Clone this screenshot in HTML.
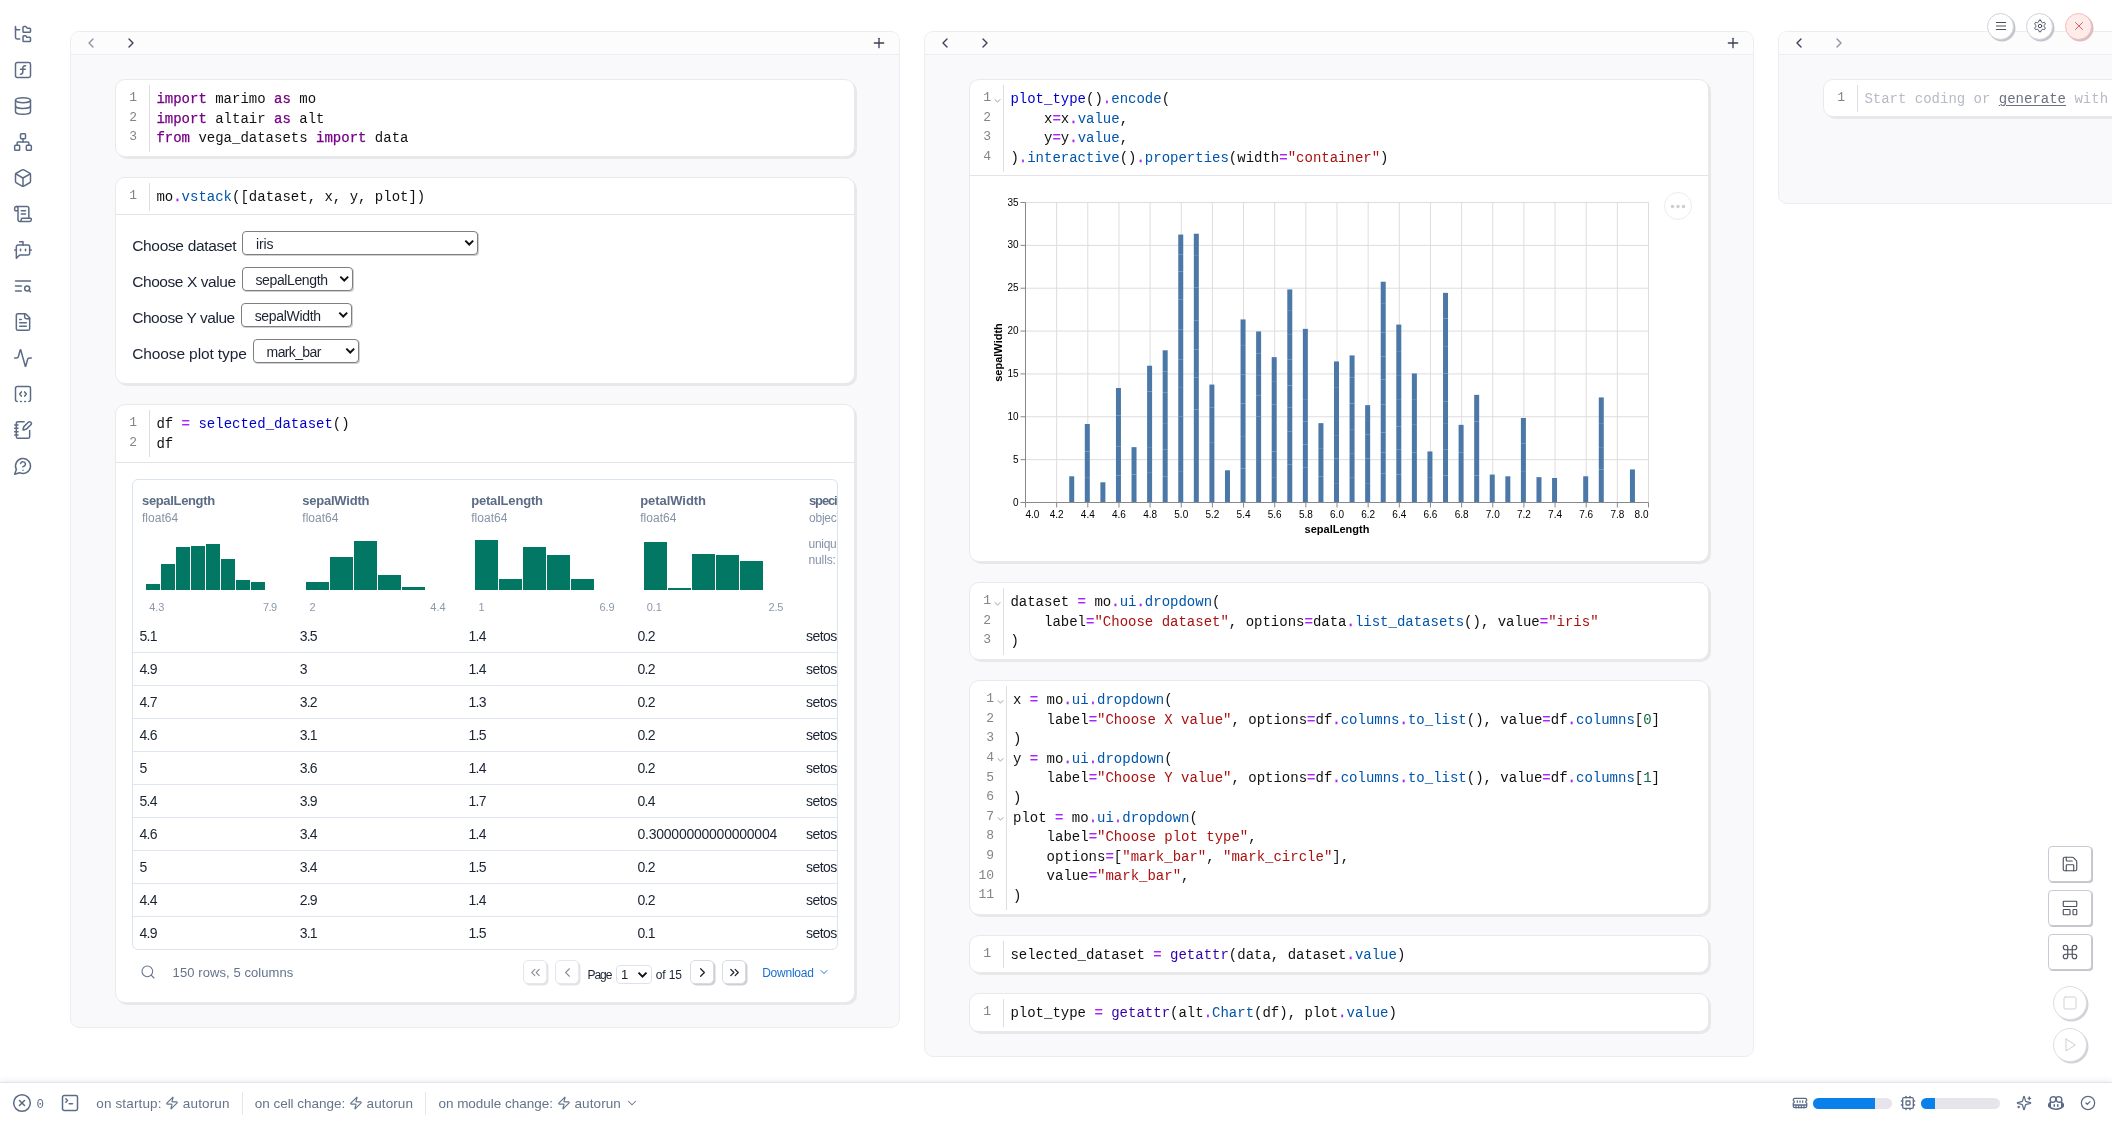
<!DOCTYPE html>
<html lang="en"><head><meta charset="utf-8"><title>marimo</title>
<style>
*{box-sizing:border-box}
html,body{margin:0;padding:0}
#root{position:absolute;left:0;top:0;width:2112px;height:1122px;will-change:transform}
body{width:2112px;height:1122px;overflow:hidden;background:#fff;font-family:"Liberation Sans", sans-serif;position:relative;color:#0f172a}
.abs,.ic,.col,.cell,.colhdr,.gline,.ln,.fold,.cl,.divider,.sel,.tbl,.pbtn,.psel,.cbtn,.sbtn,.rbtn,.status{position:absolute}
.ic{line-height:0}
.ic svg{display:block}
span{white-space:pre}
.abs{white-space:pre}
.col{background:#f9f9fb;border:1px solid #ededf1;border-radius:9px;overflow:hidden}
.colhdr{left:0;top:0;right:0;height:23px;background:#fcfcfd;border-bottom:1px solid #eeeef1}
.cell{background:#fff;border:1px solid #e9e9ec;border-radius:10px;box-shadow:2px 2px 0 0 #e8e8ea}
.gline{width:1px;background:#dddde2}
.ln{font:13px/19.600px "Liberation Mono", monospace;color:#858585;text-align:right;height:19.600px;margin-top:-1.800px}
.fold{line-height:0;margin-top:5.500px}
.cl{font:14px/19.600px "Liberation Mono", monospace;color:#111;white-space:pre;height:19.600px}
.kw{color:#708;-webkit-text-stroke:0.250px #708}
.op{color:#a2f;-webkit-text-stroke:0.250px #a2f}
.divider{left:0;right:0;height:1px;background:#e4e4e8}
.lbl{color:#1a2234;white-space:pre}
.sel{border:1px solid #7f7f7f;border-radius:4px;background:#fff;box-shadow:1px 1px 0 0 #cfcfd4;color:#1c2230}
.tbl{border:1px solid #dbe3f0;border-radius:6px;overflow:hidden;background:#fff}
.th{color:#5c6c85;line-height:20px}
.ty{color:#8593a8;line-height:18px}
.ax{color:#8a98ad;line-height:14px}
.td{color:#1a2233;line-height:20px}
.rowline{left:0;right:0;height:1px;background:#dfe6f2}
.ft{color:#64748b;line-height:20px}
.pg{color:#1a2233;line-height:16px}
.dl{color:#1a6fd0;line-height:16px}
.pbtn{width:24px;height:24px;border:1px solid #d9dbe3;border-radius:5px;background:#fff;box-shadow:1.500px 1.500px 0 0 #cfd0d6}
.pbtn.dis{border-color:#e6e7ec;box-shadow:1.500px 1.500px 0 0 #e3e3e8}
.psel{border:1px solid #dbe3f0;border-radius:4px;background:#fff}
.cbtn{width:27px;height:27px;border-radius:50%;border:1px solid #cfd2db;background:#fff;box-shadow:1.500px 1.500px 0 0 #c4c5cc;color:#3d4450}
.cbtn.red{background:#feeceb;border-color:#f7b9bc;color:#e0525a;box-shadow:1.500px 1.500px 0 0 #d8bfc2}
.sbtn{width:44px;height:36px;border:1px solid #c9cad3;border-radius:4px;background:#fff;box-shadow:1px 1px 0 0 #c4c4cb;color:#4a4e5c}
.rbtn{width:34px;height:34px;border:1px solid #dcdde3;border-radius:50%;background:#fff;box-shadow:1.500px 1.500px 0 0 #d2d3d8;color:#d0d1d6}
.status{left:0;right:0;top:1082px;height:40px;background:#fff;border-top:1px solid #dfe3ec;box-shadow:0 -2px 5px rgba(100,110,140,.10)}
.sbt{color:#64748b;line-height:20px}
.vdiv{top:9px;width:1px;height:23px;background:#e2e6ee}
.zero{font:12.500px/18px "Liberation Mono", monospace;color:#64748b}
.bar{top:14.500px;width:79px;height:11px;border-radius:6px;background:#e5e5eb;overflow:hidden}
.bar div{height:100%;background:#0a80ea}
</style></head>
<body><div id="root">
<div class="ic" style="left:13px;top:24px;color:#5b6b86"><svg width="20" height="20" viewBox="0 0 24 24" fill="none" stroke="currentColor" stroke-width="1.8" stroke-linecap="round" stroke-linejoin="round" ><path d="M20 10a1 1 0 0 0 1-1V6a1 1 0 0 0-1-1h-2.500a1 1 0 0 1-.800-.400l-.900-1.200A1 1 0 0 0 15 3h-2a1 1 0 0 0-1 1v5a1 1 0 0 0 1 1Z"/><path d="M20 21a1 1 0 0 0 1-1v-3a1 1 0 0 0-1-1h-2.900a1 1 0 0 1-.880-.550l-.420-.850a1 1 0 0 0-.920-.600H13a1 1 0 0 0-1 1v5a1 1 0 0 0 1 1Z"/><path d="M3 5a2 2 0 0 0 2 2h3"/><path d="M3 3v13a2 2 0 0 0 2 2h3"/></svg></div><div class="ic" style="left:13px;top:60px;color:#5b6b86"><svg width="20" height="20" viewBox="0 0 24 24" fill="none" stroke="currentColor" stroke-width="1.8" stroke-linecap="round" stroke-linejoin="round" ><rect width="18" height="18" x="3" y="3" rx="2" ry="2"/><path d="M9 17c2 0 2.800-1 2.800-2.800V10c0-2 1-3.300 3.200-3"/><path d="M9 11.200h5.700"/></svg></div><div class="ic" style="left:13px;top:96px;color:#5b6b86"><svg width="20" height="20" viewBox="0 0 24 24" fill="none" stroke="currentColor" stroke-width="1.8" stroke-linecap="round" stroke-linejoin="round" ><ellipse cx="12" cy="5" rx="9" ry="3"/><path d="M3 5V19A9 3 0 0 0 21 19V5"/><path d="M3 12A9 3 0 0 0 21 12"/></svg></div><div class="ic" style="left:13px;top:132px;color:#5b6b86"><svg width="20" height="20" viewBox="0 0 24 24" fill="none" stroke="currentColor" stroke-width="1.8" stroke-linecap="round" stroke-linejoin="round" ><rect x="16" y="16" width="6" height="6" rx="1"/><rect x="2" y="16" width="6" height="6" rx="1"/><rect x="9" y="2" width="6" height="6" rx="1"/><path d="M5 16v-3a1 1 0 0 1 1-1h12a1 1 0 0 1 1 1v3"/><path d="M12 12V8"/></svg></div><div class="ic" style="left:13px;top:168px;color:#5b6b86"><svg width="20" height="20" viewBox="0 0 24 24" fill="none" stroke="currentColor" stroke-width="1.8" stroke-linecap="round" stroke-linejoin="round" ><path d="M21 8a2 2 0 0 0-1-1.730l-7-4a2 2 0 0 0-2 0l-7 4A2 2 0 0 0 3 8v8a2 2 0 0 0 1 1.730l7 4a2 2 0 0 0 2 0l7-4A2 2 0 0 0 21 16Z"/><path d="m3.300 7 8.700 5 8.700-5"/><path d="M12 22V12"/></svg></div><div class="ic" style="left:13px;top:204px;color:#5b6b86"><svg width="20" height="20" viewBox="0 0 24 24" fill="none" stroke="currentColor" stroke-width="1.8" stroke-linecap="round" stroke-linejoin="round" ><path d="M15 12h-5"/><path d="M15 8h-5"/><path d="M19 17V5a2 2 0 0 0-2-2H4"/><path d="M8 21h12a2 2 0 0 0 2-2v-1a1 1 0 0 0-1-1H11a1 1 0 0 0-1 1v1a2 2 0 1 1-4 0V5a2 2 0 1 0-4 0v2a1 1 0 0 0 1 1h3"/></svg></div><div class="ic" style="left:13px;top:240px;color:#5b6b86"><svg width="20" height="20" viewBox="0 0 24 24" fill="none" stroke="currentColor" stroke-width="1.8" stroke-linecap="round" stroke-linejoin="round" ><path d="M12 6V2H8"/><path d="m8 18-4 4V8a2 2 0 0 1 2-2h12a2 2 0 0 1 2 2v8a2 2 0 0 1-2 2Z"/><path d="M2 12h2"/><path d="M9 11v2"/><path d="M15 11v2"/><path d="M20 12h2"/></svg></div><div class="ic" style="left:13px;top:276px;color:#5b6b86"><svg width="20" height="20" viewBox="0 0 24 24" fill="none" stroke="currentColor" stroke-width="1.8" stroke-linecap="round" stroke-linejoin="round" ><path d="M21 6H3"/><path d="M10 12H3"/><path d="M10 18H3"/><path d="m21 19-1.900-1.900"/><circle cx="17" cy="15" r="3"/></svg></div><div class="ic" style="left:13px;top:312px;color:#5b6b86"><svg width="20" height="20" viewBox="0 0 24 24" fill="none" stroke="currentColor" stroke-width="1.8" stroke-linecap="round" stroke-linejoin="round" ><path d="M15 2H6a2 2 0 0 0-2 2v16a2 2 0 0 0 2 2h12a2 2 0 0 0 2-2V7Z"/><path d="M14 2v4a2 2 0 0 0 2 2h4"/><path d="M10 9H8"/><path d="M16 13H8"/><path d="M16 17H8"/></svg></div><div class="ic" style="left:13px;top:348px;color:#5b6b86"><svg width="20" height="20" viewBox="0 0 24 24" fill="none" stroke="currentColor" stroke-width="1.8" stroke-linecap="round" stroke-linejoin="round" ><path d="M22 12h-2.480a2 2 0 0 0-1.930 1.460l-2.350 8.360a.250.250 0 0 1-.480 0L9.240 2.180a.250.250 0 0 0-.480 0l-2.350 8.360A2 2 0 0 1 4.490 12H2"/></svg></div><div class="ic" style="left:13px;top:384px;color:#5b6b86"><svg width="20" height="20" viewBox="0 0 24 24" fill="none" stroke="currentColor" stroke-width="1.8" stroke-linecap="round" stroke-linejoin="round" ><path d="M10 9.500 8 12l2 2.500"/><path d="M14 21h1"/><path d="m14 9.500 2 2.500-2 2.500"/><path d="M5 21a2 2 0 0 1-2-2V5a2 2 0 0 1 2-2h14a2 2 0 0 1 2 2v14a2 2 0 0 1-2 2"/><path d="M9 21h1"/></svg></div><div class="ic" style="left:13px;top:420px;color:#5b6b86"><svg width="20" height="20" viewBox="0 0 24 24" fill="none" stroke="currentColor" stroke-width="1.8" stroke-linecap="round" stroke-linejoin="round" ><path d="M13.400 2H6a2 2 0 0 0-2 2v16a2 2 0 0 0 2 2h12a2 2 0 0 0 2-2v-7.400"/><path d="M2 6h4"/><path d="M2 10h4"/><path d="M2 14h4"/><path d="M2 18h4"/><path d="M21.378 5.626a1 1 0 1 0-3.004-3.004l-5.010 5.012a2 2 0 0 0-.506.854l-.837 2.870a.500.500 0 0 0 .620.620l2.870-.837a2 2 0 0 0 .854-.506z"/></svg></div><div class="ic" style="left:13px;top:456px;color:#5b6b86"><svg width="20" height="20" viewBox="0 0 24 24" fill="none" stroke="currentColor" stroke-width="1.8" stroke-linecap="round" stroke-linejoin="round" ><path d="M7.900 20A9 9 0 1 0 4 16.100L2 22Z"/><path d="M9.090 9a3 3 0 0 1 5.830 1c0 2-3 3-3 3"/><path d="M12 17h.010"/></svg></div>
<div class="col" style="left:70px;top:31px;width:830px;height:997px"><div class="colhdr"><div class="ic" style="left:12px;top:3px;color:#8f92a3"><svg width="16" height="16" viewBox="0 0 24 24" fill="none" stroke="currentColor" stroke-width="2" stroke-linecap="round" stroke-linejoin="round" ><path d="m15 18-6-6 6-6"/></svg></div><div class="ic" style="left:52px;top:3px;color:#3b3f58"><svg width="16" height="16" viewBox="0 0 24 24" fill="none" stroke="currentColor" stroke-width="2" stroke-linecap="round" stroke-linejoin="round" ><path d="m9 18 6-6-6-6"/></svg></div><div class="ic" style="right:12px;top:3px;color:#3b3f58"><svg width="16" height="16" viewBox="0 0 24 24" fill="none" stroke="currentColor" stroke-width="2" stroke-linecap="round" stroke-linejoin="round" ><path d="M5 12h14"/><path d="M12 5v14"/></svg></div></div><div class="cell " style="left:44px;top:47px;width:740px;height:78px"><div class="gline" style="left:33px;top:5px;height:67px"></div><div class="ln" style="top:10.0px;left:0;width:21px">1</div><div class="cl" style="top:10.0px;left:40.4px"><span class="kw">import</span> marimo <span class="kw">as</span> mo</div><div class="ln" style="top:29.6px;left:0;width:21px">2</div><div class="cl" style="top:29.6px;left:40.4px"><span class="kw">import</span> altair <span class="kw">as</span> alt</div><div class="ln" style="top:49.2px;left:0;width:21px">3</div><div class="cl" style="top:49.2px;left:40.4px"><span class="kw">from</span> vega_datasets <span class="kw">import</span> data</div></div><div class="cell " style="left:44px;top:145px;width:740px;height:207px"><div class="gline" style="left:33px;top:5px;height:28px"></div><div class="ln" style="top:10.0px;left:0;width:21px">1</div><div class="cl" style="top:10.0px;left:40.4px">mo<span class="op">.</span><span style="color:#05a">vstack</span>([dataset, x, y, plot])</div><div class="divider" style="top:36px"></div><div class="abs lbl" style="left:16.2px;top:55.5px;line-height:24px"><span style="font-size:15.5px;font-weight:400;letter-spacing:-0.327px;">Choose dataset</span></div><div class="abs lbl" style="left:16.2px;top:91.5px;line-height:24px"><span style="font-size:15.5px;font-weight:400;letter-spacing:-0.431px;">Choose X value</span></div><div class="abs lbl" style="left:16.2px;top:127.5px;line-height:24px"><span style="font-size:15.5px;font-weight:400;letter-spacing:-0.448px;">Choose Y value</span></div><div class="abs lbl" style="left:16.2px;top:163.5px;line-height:24px"><span style="font-size:15.5px;font-weight:400;letter-spacing:-0.114px;">Choose plot type</span></div><div class="sel" style="left:126px;top:53px;width:236px;height:24px"><div class="abs" style="left:13px;top:0.700px;line-height:22px;white-space:pre"><span style="font-size:14px;font-weight:400;letter-spacing:-0.123px;">iris</span></div><svg class="abs" style="right:3px;top:7.0px" width="10.500" height="7.900" viewBox="0 0 12 9" fill="none" stroke="#111" stroke-width="2.200"><path d="M1.500 1.800 6 6.300 10.500 1.800"/></svg></div><div class="sel" style="left:126px;top:89px;width:111px;height:24px"><div class="abs" style="left:12.5px;top:0.700px;line-height:22px;white-space:pre"><span style="font-size:14px;font-weight:400;letter-spacing:-0.382px;">sepalLength</span></div><svg class="abs" style="right:3px;top:7.0px" width="10.500" height="7.900" viewBox="0 0 12 9" fill="none" stroke="#111" stroke-width="2.200"><path d="M1.500 1.800 6 6.300 10.500 1.800"/></svg></div><div class="sel" style="left:125px;top:125px;width:111px;height:24px"><div class="abs" style="left:12.699999999999989px;top:0.700px;line-height:22px;white-space:pre"><span style="font-size:14px;font-weight:400;letter-spacing:-0.327px;">sepalWidth</span></div><svg class="abs" style="right:3px;top:7.0px" width="10.500" height="7.900" viewBox="0 0 12 9" fill="none" stroke="#111" stroke-width="2.200"><path d="M1.500 1.800 6 6.300 10.500 1.800"/></svg></div><div class="sel" style="left:137px;top:161px;width:106px;height:24px"><div class="abs" style="left:12.600000000000023px;top:0.700px;line-height:22px;white-space:pre"><span style="font-size:14px;font-weight:400;letter-spacing:-0.630px;">mark_bar</span></div><svg class="abs" style="right:3px;top:7.0px" width="10.500" height="7.900" viewBox="0 0 12 9" fill="none" stroke="#111" stroke-width="2.200"><path d="M1.500 1.800 6 6.300 10.500 1.800"/></svg></div></div><div class="cell " style="left:44px;top:372px;width:740px;height:599px"><div class="gline" style="left:33px;top:5px;height:47px"></div><div class="ln" style="top:10.0px;left:0;width:21px">1</div><div class="cl" style="top:10.0px;left:40.4px">df <span class="op">=</span> <span style="color:#00c">selected_dataset</span>()</div><div class="ln" style="top:29.6px;left:0;width:21px">2</div><div class="cl" style="top:29.6px;left:40.4px">df</div><div class="divider" style="top:57px"></div><div class="tbl" style="left:16px;top:74px;width:706px;height:471px"><div class="abs th" style="left:9.0px;top:10px"><span style="font-size:13px;font-weight:700;letter-spacing:-0.343px;">sepalLength</span></div><div class="abs ty" style="left:9.0px;top:28.2px"><span style="font-size:12px;font-weight:400;letter-spacing:0.024px;">float64</span></div><div class="abs th" style="left:169.3px;top:10px"><span style="font-size:13px;font-weight:700;letter-spacing:-0.233px;">sepalWidth</span></div><div class="abs ty" style="left:169.3px;top:28.2px"><span style="font-size:12px;font-weight:400;letter-spacing:0.024px;">float64</span></div><div class="abs th" style="left:338.2px;top:10px"><span style="font-size:13px;font-weight:700;letter-spacing:-0.188px;">petalLength</span></div><div class="abs ty" style="left:338.2px;top:28.2px"><span style="font-size:12px;font-weight:400;letter-spacing:0.024px;">float64</span></div><div class="abs th" style="left:507.2px;top:10px"><span style="font-size:13px;font-weight:700;letter-spacing:-0.053px;">petalWidth</span></div><div class="abs ty" style="left:507.2px;top:28.2px"><span style="font-size:12px;font-weight:400;letter-spacing:0.024px;">float64</span></div><div class="abs th" style="left:676px;top:10px"><span style="font-size:13px;font-weight:700;letter-spacing:-1.130px;">speci</span>es</div><div class="abs ty" style="left:676px;top:28.2px"><span style="font-size:12px;font-weight:400;letter-spacing:-0.217px;">objec</span>t</div><div class="abs ty" style="left:675.5px;top:54px"><span style="font-size:12px;font-weight:400;letter-spacing:-0.275px;">uniqu</span>e: 3</div><div class="abs ty" style="left:675.5px;top:70px"><span style="font-size:12px;font-weight:400;letter-spacing:-0.119px;">nulls:</span> 0</div><div class="abs" style="background:#027864;left:13.0px;top:104.0px;width:14px;height:6px"></div><div class="abs" style="background:#027864;left:28.0px;top:84.2px;width:14px;height:25.8px"></div><div class="abs" style="background:#027864;left:43.0px;top:67.3px;width:14px;height:42.7px"></div><div class="abs" style="background:#027864;left:58.0px;top:65.9px;width:14px;height:44.1px"></div><div class="abs" style="background:#027864;left:73.0px;top:64.1px;width:14px;height:45.9px"></div><div class="abs" style="background:#027864;left:88.0px;top:78.6px;width:14px;height:31.4px"></div><div class="abs" style="background:#027864;left:103.0px;top:100.1px;width:14px;height:9.9px"></div><div class="abs" style="background:#027864;left:118.0px;top:101.5px;width:14px;height:8.5px"></div><div class="abs" style="background:#027864;left:173.0px;top:102.0px;width:23px;height:8px"></div><div class="abs" style="background:#027864;left:197.0px;top:77.2px;width:23px;height:32.8px"></div><div class="abs" style="background:#027864;left:221.0px;top:61.3px;width:23px;height:48.7px"></div><div class="abs" style="background:#027864;left:245.0px;top:95.1px;width:23px;height:14.9px"></div><div class="abs" style="background:#027864;left:269.0px;top:107.0px;width:23px;height:3px"></div><div class="abs" style="background:#027864;left:342.0px;top:60.1px;width:23px;height:49.9px"></div><div class="abs" style="background:#027864;left:366.0px;top:99.1px;width:23px;height:10.9px"></div><div class="abs" style="background:#027864;left:390.0px;top:67.1px;width:23px;height:42.9px"></div><div class="abs" style="background:#027864;left:414.0px;top:75.2px;width:23px;height:34.8px"></div><div class="abs" style="background:#027864;left:438.0px;top:99.1px;width:23px;height:10.9px"></div><div class="abs" style="background:#027864;left:511.0px;top:62.1px;width:23px;height:47.9px"></div><div class="abs" style="background:#027864;left:535.0px;top:108.4px;width:23px;height:1.6px"></div><div class="abs" style="background:#027864;left:559.0px;top:74.0px;width:23px;height:36px"></div><div class="abs" style="background:#027864;left:583.0px;top:75.2px;width:23px;height:34.8px"></div><div class="abs" style="background:#027864;left:607.0px;top:81.2px;width:23px;height:28.8px"></div><div class="abs ax" style="left:16.2px;top:119.2px"><span style="font-size:11px;font-weight:400;letter-spacing:-0.099px;">4.3</span></div><div class="abs ax" style="left:130.0px;top:119.2px"><span style="font-size:11px;font-weight:400;letter-spacing:-0.632px;">7.9</span></div><div class="abs ax" style="left:176.6px;top:119.2px"><span style="font-size:11px;font-weight:400;letter-spacing:-0.625px;">2</span></div><div class="abs ax" style="left:297.3px;top:119.2px"><span style="font-size:11px;font-weight:400;letter-spacing:0.068px;">4.4</span></div><div class="abs ax" style="left:345.4px;top:119.2px"><span style="font-size:11px;font-weight:400;letter-spacing:-0.825px;">1</span></div><div class="abs ax" style="left:466.4px;top:119.2px"><span style="font-size:11px;font-weight:400;letter-spacing:-0.032px;">6.9</span></div><div class="abs ax" style="left:513.8px;top:119.2px"><span style="font-size:11px;font-weight:400;letter-spacing:-0.132px;">0.1</span></div><div class="abs ax" style="left:635.4px;top:119.2px"><span style="font-size:11px;font-weight:400;letter-spacing:-0.132px;">2.5</span></div><div class="abs td" style="left:6.5px;top:146.3px;font-size:14px;letter-spacing:-0.750px">5.1</div><div class="abs td" style="left:166.7px;top:146.3px;font-size:14px;letter-spacing:-0.750px">3.5</div><div class="abs td" style="left:335.5px;top:146.3px;font-size:14px;letter-spacing:-0.750px">1.4</div><div class="abs td" style="left:504.5px;top:146.3px;font-size:14px;letter-spacing:-0.750px">0.2</div><div class="abs td" style="left:673.0px;top:146.3px;font-size:14px;letter-spacing:-0.750px"><span style="font-size:14px;font-weight:400;letter-spacing:-0.574px;">setos</span>a</div><div class="abs rowline" style="top:172px"></div><div class="abs td" style="left:6.5px;top:179.3px;font-size:14px;letter-spacing:-0.750px">4.9</div><div class="abs td" style="left:166.7px;top:179.3px;font-size:14px;letter-spacing:-0.750px">3</div><div class="abs td" style="left:335.5px;top:179.3px;font-size:14px;letter-spacing:-0.750px">1.4</div><div class="abs td" style="left:504.5px;top:179.3px;font-size:14px;letter-spacing:-0.750px">0.2</div><div class="abs td" style="left:673.0px;top:179.3px;font-size:14px;letter-spacing:-0.750px"><span style="font-size:14px;font-weight:400;letter-spacing:-0.574px;">setos</span>a</div><div class="abs rowline" style="top:205px"></div><div class="abs td" style="left:6.5px;top:212.3px;font-size:14px;letter-spacing:-0.750px">4.7</div><div class="abs td" style="left:166.7px;top:212.3px;font-size:14px;letter-spacing:-0.750px">3.2</div><div class="abs td" style="left:335.5px;top:212.3px;font-size:14px;letter-spacing:-0.750px">1.3</div><div class="abs td" style="left:504.5px;top:212.3px;font-size:14px;letter-spacing:-0.750px">0.2</div><div class="abs td" style="left:673.0px;top:212.3px;font-size:14px;letter-spacing:-0.750px"><span style="font-size:14px;font-weight:400;letter-spacing:-0.574px;">setos</span>a</div><div class="abs rowline" style="top:238px"></div><div class="abs td" style="left:6.5px;top:245.3px;font-size:14px;letter-spacing:-0.750px">4.6</div><div class="abs td" style="left:166.7px;top:245.3px;font-size:14px;letter-spacing:-0.750px">3.1</div><div class="abs td" style="left:335.5px;top:245.3px;font-size:14px;letter-spacing:-0.750px">1.5</div><div class="abs td" style="left:504.5px;top:245.3px;font-size:14px;letter-spacing:-0.750px">0.2</div><div class="abs td" style="left:673.0px;top:245.3px;font-size:14px;letter-spacing:-0.750px"><span style="font-size:14px;font-weight:400;letter-spacing:-0.574px;">setos</span>a</div><div class="abs rowline" style="top:271px"></div><div class="abs td" style="left:6.5px;top:278.3px;font-size:14px;letter-spacing:-0.750px">5</div><div class="abs td" style="left:166.7px;top:278.3px;font-size:14px;letter-spacing:-0.750px">3.6</div><div class="abs td" style="left:335.5px;top:278.3px;font-size:14px;letter-spacing:-0.750px">1.4</div><div class="abs td" style="left:504.5px;top:278.3px;font-size:14px;letter-spacing:-0.750px">0.2</div><div class="abs td" style="left:673.0px;top:278.3px;font-size:14px;letter-spacing:-0.750px"><span style="font-size:14px;font-weight:400;letter-spacing:-0.574px;">setos</span>a</div><div class="abs rowline" style="top:304px"></div><div class="abs td" style="left:6.5px;top:311.3px;font-size:14px;letter-spacing:-0.750px">5.4</div><div class="abs td" style="left:166.7px;top:311.3px;font-size:14px;letter-spacing:-0.750px">3.9</div><div class="abs td" style="left:335.5px;top:311.3px;font-size:14px;letter-spacing:-0.750px">1.7</div><div class="abs td" style="left:504.5px;top:311.3px;font-size:14px;letter-spacing:-0.750px">0.4</div><div class="abs td" style="left:673.0px;top:311.3px;font-size:14px;letter-spacing:-0.750px"><span style="font-size:14px;font-weight:400;letter-spacing:-0.574px;">setos</span>a</div><div class="abs rowline" style="top:337px"></div><div class="abs td" style="left:6.5px;top:344.3px;font-size:14px;letter-spacing:-0.750px">4.6</div><div class="abs td" style="left:166.7px;top:344.3px;font-size:14px;letter-spacing:-0.750px">3.4</div><div class="abs td" style="left:335.5px;top:344.3px;font-size:14px;letter-spacing:-0.750px">1.4</div><div class="abs td" style="left:504.5px;top:344.3px;font-size:14px;letter-spacing:-0.750px"><span style="font-size:14px;font-weight:400;letter-spacing:-0.239px;">0.30000000000000004</span></div><div class="abs td" style="left:673.0px;top:344.3px;font-size:14px;letter-spacing:-0.750px"><span style="font-size:14px;font-weight:400;letter-spacing:-0.574px;">setos</span>a</div><div class="abs rowline" style="top:370px"></div><div class="abs td" style="left:6.5px;top:377.3px;font-size:14px;letter-spacing:-0.750px">5</div><div class="abs td" style="left:166.7px;top:377.3px;font-size:14px;letter-spacing:-0.750px">3.4</div><div class="abs td" style="left:335.5px;top:377.3px;font-size:14px;letter-spacing:-0.750px">1.5</div><div class="abs td" style="left:504.5px;top:377.3px;font-size:14px;letter-spacing:-0.750px">0.2</div><div class="abs td" style="left:673.0px;top:377.3px;font-size:14px;letter-spacing:-0.750px"><span style="font-size:14px;font-weight:400;letter-spacing:-0.574px;">setos</span>a</div><div class="abs rowline" style="top:403px"></div><div class="abs td" style="left:6.5px;top:410.3px;font-size:14px;letter-spacing:-0.750px">4.4</div><div class="abs td" style="left:166.7px;top:410.3px;font-size:14px;letter-spacing:-0.750px">2.9</div><div class="abs td" style="left:335.5px;top:410.3px;font-size:14px;letter-spacing:-0.750px">1.4</div><div class="abs td" style="left:504.5px;top:410.3px;font-size:14px;letter-spacing:-0.750px">0.2</div><div class="abs td" style="left:673.0px;top:410.3px;font-size:14px;letter-spacing:-0.750px"><span style="font-size:14px;font-weight:400;letter-spacing:-0.574px;">setos</span>a</div><div class="abs rowline" style="top:436px"></div><div class="abs td" style="left:6.5px;top:443.3px;font-size:14px;letter-spacing:-0.750px">4.9</div><div class="abs td" style="left:166.7px;top:443.3px;font-size:14px;letter-spacing:-0.750px">3.1</div><div class="abs td" style="left:335.5px;top:443.3px;font-size:14px;letter-spacing:-0.750px">1.5</div><div class="abs td" style="left:504.5px;top:443.3px;font-size:14px;letter-spacing:-0.750px">0.1</div><div class="abs td" style="left:673.0px;top:443.3px;font-size:14px;letter-spacing:-0.750px"><span style="font-size:14px;font-weight:400;letter-spacing:-0.574px;">setos</span>a</div></div><div class="abs ic" style="left:24px;top:559px;color:#64748b"><svg width="16" height="16" viewBox="0 0 24 24" fill="none" stroke="currentColor" stroke-width="1.6" stroke-linecap="round" stroke-linejoin="round" ><circle cx="11" cy="11" r="8"/><path d="m21 21-4.300-4.300"/></svg></div><div class="abs ft" style="left:56.6px;top:557px"><span style="font-size:13px;font-weight:400;letter-spacing:0.082px;">150 rows, 5 columns</span></div><div class="pbtn dis" style="left:407px;top:555px"><div class="ic" style="left:3.500px;top:3.500px;color:#8a8e9a"><svg width="15" height="15" viewBox="0 0 24 24" fill="none" stroke="currentColor" stroke-width="1.7" stroke-linecap="round" stroke-linejoin="round" ><path d="m11 17-5-5 5-5"/><path d="m18 17-5-5 5-5"/></svg></div></div><div class="pbtn dis" style="left:439px;top:555px"><div class="ic" style="left:3.500px;top:3.500px;color:#8a8e9a"><svg width="15" height="15" viewBox="0 0 24 24" fill="none" stroke="currentColor" stroke-width="1.7" stroke-linecap="round" stroke-linejoin="round" ><path d="m15 18-6-6 6-6"/></svg></div></div><div class="pbtn" style="left:574px;top:555px"><div class="ic" style="left:3.500px;top:3.500px;color:#1e2233"><svg width="15" height="15" viewBox="0 0 24 24" fill="none" stroke="currentColor" stroke-width="2" stroke-linecap="round" stroke-linejoin="round" ><path d="m9 18 6-6-6-6"/></svg></div></div><div class="pbtn" style="left:606px;top:555px"><div class="ic" style="left:3.500px;top:3.500px;color:#1e2233"><svg width="15" height="15" viewBox="0 0 24 24" fill="none" stroke="currentColor" stroke-width="2" stroke-linecap="round" stroke-linejoin="round" ><path d="m6 17 5-5-5-5"/><path d="m13 17 5-5-5-5"/></svg></div></div><div class="abs pg" style="left:471.4px;top:561px"><span style="font-size:12px;font-weight:400;letter-spacing:-1.008px;">Page</span></div><div class="psel" style="left:500px;top:560px;width:36px;height:19px"><div class="abs" style="left:4px;top:0;line-height:18px;font-size:13px;color:#222">1</div><svg class="abs" style="right:3px;top:4.500px" width="11" height="8" viewBox="0 0 12 9" fill="none" stroke="#111" stroke-width="2.200"><path d="M1.500 1.800 6 6.300 10.500 1.800"/></svg></div><div class="abs pg" style="left:539.8px;top:561px"><span style="font-size:12px;font-weight:400;letter-spacing:-0.161px;">of 15</span></div><div class="abs dl" style="left:646.2px;top:559px"><span style="font-size:12px;font-weight:400;letter-spacing:-0.234px;">Download</span></div><div class="abs ic" style="left:702px;top:561px;color:#1a6fd0"><svg width="12" height="12" viewBox="0 0 24 24" fill="none" stroke="currentColor" stroke-width="2" stroke-linecap="round" stroke-linejoin="round" ><path d="m6 9 6 6 6-6"/></svg></div></div></div>
<div class="col" style="left:924px;top:31px;width:830px;height:1026px"><div class="colhdr"><div class="ic" style="left:12px;top:3px;color:#3b3f58"><svg width="16" height="16" viewBox="0 0 24 24" fill="none" stroke="currentColor" stroke-width="2" stroke-linecap="round" stroke-linejoin="round" ><path d="m15 18-6-6 6-6"/></svg></div><div class="ic" style="left:52px;top:3px;color:#3b3f58"><svg width="16" height="16" viewBox="0 0 24 24" fill="none" stroke="currentColor" stroke-width="2" stroke-linecap="round" stroke-linejoin="round" ><path d="m9 18 6-6-6-6"/></svg></div><div class="ic" style="right:12px;top:3px;color:#3b3f58"><svg width="16" height="16" viewBox="0 0 24 24" fill="none" stroke="currentColor" stroke-width="2" stroke-linecap="round" stroke-linejoin="round" ><path d="M5 12h14"/><path d="M12 5v14"/></svg></div></div><div class="cell " style="left:44px;top:47px;width:740px;height:483px"><div class="gline" style="left:33px;top:5px;height:87px"></div><div class="ln" style="top:10.0px;left:0;width:21px">1</div><div class="fold" style="top:10.0px;left:23px"><svg width="9" height="9" viewBox="0 0 9 9" fill="none" stroke="#9a9ea8" stroke-width="1"><path d="M1.700 3.300 4.500 6.100 7.300 3.300"/></svg></div><div class="cl" style="top:10.0px;left:40.4px"><span style="color:#00c">plot_type</span>()<span class="op">.</span><span style="color:#05a">encode</span>(</div><div class="ln" style="top:29.6px;left:0;width:21px">2</div><div class="cl" style="top:29.6px;left:40.4px">    x<span class="op">=</span>x<span class="op">.</span><span style="color:#05a">value</span>,</div><div class="ln" style="top:49.2px;left:0;width:21px">3</div><div class="cl" style="top:49.2px;left:40.4px">    y<span class="op">=</span>y<span class="op">.</span><span style="color:#05a">value</span>,</div><div class="ln" style="top:68.8px;left:0;width:21px">4</div><div class="cl" style="top:68.8px;left:40.4px">)<span class="op">.</span><span style="color:#05a">interactive</span>()<span class="op">.</span><span style="color:#05a">properties</span>(width<span class="op">=</span><span style="color:#a11">&quot;container&quot;</span>)</div><div class="divider" style="top:95px"></div><svg class="abs" style="left:-970px;top:-80px" width="1760" height="580" viewBox="0 0 1760 580" font-family='"Liberation Sans", sans-serif' fill="#000" shape-rendering="auto"><line x1="1025.50" x2="1025.50" y1="202.5" y2="502.5" stroke="#ddd"/><line x1="1056.65" x2="1056.65" y1="202.5" y2="502.5" stroke="#ddd"/><line x1="1087.80" x2="1087.80" y1="202.5" y2="502.5" stroke="#ddd"/><line x1="1118.95" x2="1118.95" y1="202.5" y2="502.5" stroke="#ddd"/><line x1="1150.10" x2="1150.10" y1="202.5" y2="502.5" stroke="#ddd"/><line x1="1181.25" x2="1181.25" y1="202.5" y2="502.5" stroke="#ddd"/><line x1="1212.40" x2="1212.40" y1="202.5" y2="502.5" stroke="#ddd"/><line x1="1243.55" x2="1243.55" y1="202.5" y2="502.5" stroke="#ddd"/><line x1="1274.70" x2="1274.70" y1="202.5" y2="502.5" stroke="#ddd"/><line x1="1305.85" x2="1305.85" y1="202.5" y2="502.5" stroke="#ddd"/><line x1="1337.00" x2="1337.00" y1="202.5" y2="502.5" stroke="#ddd"/><line x1="1368.15" x2="1368.15" y1="202.5" y2="502.5" stroke="#ddd"/><line x1="1399.30" x2="1399.30" y1="202.5" y2="502.5" stroke="#ddd"/><line x1="1430.45" x2="1430.45" y1="202.5" y2="502.5" stroke="#ddd"/><line x1="1461.60" x2="1461.60" y1="202.5" y2="502.5" stroke="#ddd"/><line x1="1492.75" x2="1492.75" y1="202.5" y2="502.5" stroke="#ddd"/><line x1="1523.90" x2="1523.90" y1="202.5" y2="502.5" stroke="#ddd"/><line x1="1555.05" x2="1555.05" y1="202.5" y2="502.5" stroke="#ddd"/><line x1="1586.20" x2="1586.20" y1="202.5" y2="502.5" stroke="#ddd"/><line x1="1617.35" x2="1617.35" y1="202.5" y2="502.5" stroke="#ddd"/><line x1="1648.50" x2="1648.50" y1="202.5" y2="502.5" stroke="#ddd"/><line x1="1025.5" x2="1648.5" y1="502.50" y2="502.50" stroke="#ddd"/><line x1="1025.5" x2="1648.5" y1="459.64" y2="459.64" stroke="#ddd"/><line x1="1025.5" x2="1648.5" y1="416.79" y2="416.79" stroke="#ddd"/><line x1="1025.5" x2="1648.5" y1="373.93" y2="373.93" stroke="#ddd"/><line x1="1025.5" x2="1648.5" y1="331.07" y2="331.07" stroke="#ddd"/><line x1="1025.5" x2="1648.5" y1="288.21" y2="288.21" stroke="#ddd"/><line x1="1025.5" x2="1648.5" y1="245.36" y2="245.36" stroke="#ddd"/><line x1="1025.5" x2="1648.5" y1="202.50" y2="202.50" stroke="#ddd"/><rect x="1193.82" y="472.00" width="5" height="30.00" fill="#4c78a8"/><rect x="1162.68" y="476.29" width="5" height="25.71" fill="#4c78a8"/><rect x="1131.53" y="474.57" width="5" height="27.43" fill="#4c78a8"/><rect x="1115.95" y="475.43" width="5" height="26.57" fill="#4c78a8"/><rect x="1178.25" y="471.14" width="5" height="30.86" fill="#4c78a8"/><rect x="1240.55" y="468.57" width="5" height="33.43" fill="#4c78a8"/><rect x="1115.95" y="446.29" width="5" height="29.14" fill="#4c78a8"/><rect x="1178.25" y="442.00" width="5" height="29.14" fill="#4c78a8"/><rect x="1084.80" y="477.14" width="5" height="24.86" fill="#4c78a8"/><rect x="1162.68" y="449.71" width="5" height="26.57" fill="#4c78a8"/><rect x="1240.55" y="436.86" width="5" height="31.71" fill="#4c78a8"/><rect x="1147.10" y="472.86" width="5" height="29.14" fill="#4c78a8"/><rect x="1147.10" y="447.14" width="5" height="25.71" fill="#4c78a8"/><rect x="1069.22" y="476.29" width="5" height="25.71" fill="#4c78a8"/><rect x="1302.85" y="467.71" width="5" height="34.29" fill="#4c78a8"/><rect x="1287.28" y="464.29" width="5" height="37.71" fill="#4c78a8"/><rect x="1240.55" y="403.43" width="5" height="33.43" fill="#4c78a8"/><rect x="1193.82" y="442.00" width="5" height="30.00" fill="#4c78a8"/><rect x="1287.28" y="431.71" width="5" height="32.57" fill="#4c78a8"/><rect x="1193.82" y="409.43" width="5" height="32.57" fill="#4c78a8"/><rect x="1240.55" y="374.29" width="5" height="29.14" fill="#4c78a8"/><rect x="1193.82" y="377.71" width="5" height="31.71" fill="#4c78a8"/><rect x="1115.95" y="415.43" width="5" height="30.86" fill="#4c78a8"/><rect x="1193.82" y="349.43" width="5" height="28.29" fill="#4c78a8"/><rect x="1147.10" y="418.00" width="5" height="29.14" fill="#4c78a8"/><rect x="1178.25" y="416.29" width="5" height="25.71" fill="#4c78a8"/><rect x="1178.25" y="387.14" width="5" height="29.14" fill="#4c78a8"/><rect x="1209.40" y="472.00" width="5" height="30.00" fill="#4c78a8"/><rect x="1209.40" y="442.86" width="5" height="29.14" fill="#4c78a8"/><rect x="1131.53" y="447.14" width="5" height="27.43" fill="#4c78a8"/><rect x="1147.10" y="391.43" width="5" height="26.57" fill="#4c78a8"/><rect x="1240.55" y="345.14" width="5" height="29.14" fill="#4c78a8"/><rect x="1209.40" y="407.71" width="5" height="35.14" fill="#4c78a8"/><rect x="1256.12" y="466.00" width="5" height="36.00" fill="#4c78a8"/><rect x="1162.68" y="423.14" width="5" height="26.57" fill="#4c78a8"/><rect x="1178.25" y="359.71" width="5" height="27.43" fill="#4c78a8"/><rect x="1256.12" y="436.00" width="5" height="30.00" fill="#4c78a8"/><rect x="1162.68" y="392.29" width="5" height="30.86" fill="#4c78a8"/><rect x="1084.80" y="451.43" width="5" height="25.71" fill="#4c78a8"/><rect x="1193.82" y="320.29" width="5" height="29.14" fill="#4c78a8"/><rect x="1178.25" y="329.71" width="5" height="30.00" fill="#4c78a8"/><rect x="1100.38" y="482.29" width="5" height="19.71" fill="#4c78a8"/><rect x="1084.80" y="424.00" width="5" height="27.43" fill="#4c78a8"/><rect x="1178.25" y="299.71" width="5" height="30.00" fill="#4c78a8"/><rect x="1193.82" y="287.71" width="5" height="32.57" fill="#4c78a8"/><rect x="1147.10" y="365.71" width="5" height="25.71" fill="#4c78a8"/><rect x="1193.82" y="255.14" width="5" height="32.57" fill="#4c78a8"/><rect x="1115.95" y="388.00" width="5" height="27.43" fill="#4c78a8"/><rect x="1224.97" y="470.29" width="5" height="31.71" fill="#4c78a8"/><rect x="1178.25" y="271.43" width="5" height="28.29" fill="#4c78a8"/><rect x="1489.75" y="474.57" width="5" height="27.43" fill="#4c78a8"/><rect x="1396.30" y="474.57" width="5" height="27.43" fill="#4c78a8"/><rect x="1474.18" y="475.43" width="5" height="26.57" fill="#4c78a8"/><rect x="1256.12" y="416.29" width="5" height="19.71" fill="#4c78a8"/><rect x="1411.88" y="478.00" width="5" height="24.00" fill="#4c78a8"/><rect x="1287.28" y="407.71" width="5" height="24.00" fill="#4c78a8"/><rect x="1380.72" y="473.71" width="5" height="28.29" fill="#4c78a8"/><rect x="1162.68" y="371.71" width="5" height="20.57" fill="#4c78a8"/><rect x="1427.45" y="477.14" width="5" height="24.86" fill="#4c78a8"/><rect x="1209.40" y="384.57" width="5" height="23.14" fill="#4c78a8"/><rect x="1178.25" y="254.29" width="5" height="17.14" fill="#4c78a8"/><rect x="1318.43" y="476.29" width="5" height="25.71" fill="#4c78a8"/><rect x="1334.00" y="483.14" width="5" height="18.86" fill="#4c78a8"/><rect x="1349.57" y="477.14" width="5" height="24.86" fill="#4c78a8"/><rect x="1271.70" y="477.14" width="5" height="24.86" fill="#4c78a8"/><rect x="1443.03" y="475.43" width="5" height="26.57" fill="#4c78a8"/><rect x="1271.70" y="451.43" width="5" height="25.71" fill="#4c78a8"/><rect x="1302.85" y="444.57" width="5" height="23.14" fill="#4c78a8"/><rect x="1365.15" y="483.14" width="5" height="18.86" fill="#4c78a8"/><rect x="1271.70" y="430.00" width="5" height="21.43" fill="#4c78a8"/><rect x="1318.43" y="448.86" width="5" height="27.43" fill="#4c78a8"/><rect x="1349.57" y="453.14" width="5" height="24.00" fill="#4c78a8"/><rect x="1380.72" y="452.29" width="5" height="21.43" fill="#4c78a8"/><rect x="1349.57" y="429.14" width="5" height="24.00" fill="#4c78a8"/><rect x="1396.30" y="449.71" width="5" height="24.86" fill="#4c78a8"/><rect x="1427.45" y="451.43" width="5" height="25.71" fill="#4c78a8"/><rect x="1458.60" y="478.00" width="5" height="24.00" fill="#4c78a8"/><rect x="1443.03" y="449.71" width="5" height="25.71" fill="#4c78a8"/><rect x="1334.00" y="458.29" width="5" height="24.86" fill="#4c78a8"/><rect x="1287.28" y="385.43" width="5" height="22.29" fill="#4c78a8"/><rect x="1256.12" y="395.71" width="5" height="20.57" fill="#4c78a8"/><rect x="1256.12" y="375.14" width="5" height="20.57" fill="#4c78a8"/><rect x="1302.85" y="421.43" width="5" height="23.14" fill="#4c78a8"/><rect x="1334.00" y="435.14" width="5" height="23.14" fill="#4c78a8"/><rect x="1240.55" y="319.43" width="5" height="25.71" fill="#4c78a8"/><rect x="1334.00" y="406.00" width="5" height="29.14" fill="#4c78a8"/><rect x="1443.03" y="423.14" width="5" height="26.57" fill="#4c78a8"/><rect x="1380.72" y="432.57" width="5" height="19.71" fill="#4c78a8"/><rect x="1271.70" y="404.29" width="5" height="25.71" fill="#4c78a8"/><rect x="1256.12" y="353.71" width="5" height="21.43" fill="#4c78a8"/><rect x="1256.12" y="331.43" width="5" height="22.29" fill="#4c78a8"/><rect x="1349.57" y="403.43" width="5" height="25.71" fill="#4c78a8"/><rect x="1302.85" y="399.14" width="5" height="22.29" fill="#4c78a8"/><rect x="1178.25" y="234.57" width="5" height="19.71" fill="#4c78a8"/><rect x="1271.70" y="381.14" width="5" height="23.14" fill="#4c78a8"/><rect x="1287.28" y="359.71" width="5" height="25.71" fill="#4c78a8"/><rect x="1287.28" y="334.86" width="5" height="24.86" fill="#4c78a8"/><rect x="1365.15" y="458.29" width="5" height="24.86" fill="#4c78a8"/><rect x="1193.82" y="233.71" width="5" height="21.43" fill="#4c78a8"/><rect x="1287.28" y="310.86" width="5" height="24.00" fill="#4c78a8"/><rect x="1380.72" y="404.29" width="5" height="28.29" fill="#4c78a8"/><rect x="1302.85" y="376.00" width="5" height="23.14" fill="#4c78a8"/><rect x="1505.32" y="476.29" width="5" height="25.71" fill="#4c78a8"/><rect x="1380.72" y="379.43" width="5" height="24.86" fill="#4c78a8"/><rect x="1411.88" y="452.29" width="5" height="25.71" fill="#4c78a8"/><rect x="1583.20" y="476.29" width="5" height="25.71" fill="#4c78a8"/><rect x="1162.68" y="350.29" width="5" height="21.43" fill="#4c78a8"/><rect x="1536.47" y="477.14" width="5" height="24.86" fill="#4c78a8"/><rect x="1443.03" y="401.71" width="5" height="21.43" fill="#4c78a8"/><rect x="1520.90" y="471.14" width="5" height="30.86" fill="#4c78a8"/><rect x="1411.88" y="424.86" width="5" height="27.43" fill="#4c78a8"/><rect x="1396.30" y="426.57" width="5" height="23.14" fill="#4c78a8"/><rect x="1458.60" y="452.29" width="5" height="25.71" fill="#4c78a8"/><rect x="1287.28" y="289.43" width="5" height="21.43" fill="#4c78a8"/><rect x="1302.85" y="352.00" width="5" height="24.00" fill="#4c78a8"/><rect x="1396.30" y="399.14" width="5" height="27.43" fill="#4c78a8"/><rect x="1411.88" y="399.14" width="5" height="25.71" fill="#4c78a8"/><rect x="1598.78" y="469.43" width="5" height="32.57" fill="#4c78a8"/><rect x="1598.78" y="447.14" width="5" height="22.29" fill="#4c78a8"/><rect x="1334.00" y="387.14" width="5" height="18.86" fill="#4c78a8"/><rect x="1474.18" y="448.00" width="5" height="27.43" fill="#4c78a8"/><rect x="1271.70" y="357.14" width="5" height="24.00" fill="#4c78a8"/><rect x="1598.78" y="423.14" width="5" height="24.00" fill="#4c78a8"/><rect x="1380.72" y="356.29" width="5" height="23.14" fill="#4c78a8"/><rect x="1443.03" y="373.43" width="5" height="28.29" fill="#4c78a8"/><rect x="1520.90" y="443.71" width="5" height="27.43" fill="#4c78a8"/><rect x="1365.15" y="434.29" width="5" height="24.00" fill="#4c78a8"/><rect x="1349.57" y="377.71" width="5" height="25.71" fill="#4c78a8"/><rect x="1396.30" y="375.14" width="5" height="24.00" fill="#4c78a8"/><rect x="1520.90" y="418.00" width="5" height="25.71" fill="#4c78a8"/><rect x="1552.05" y="478.00" width="5" height="24.00" fill="#4c78a8"/><rect x="1629.93" y="469.43" width="5" height="32.57" fill="#4c78a8"/><rect x="1396.30" y="351.14" width="5" height="24.00" fill="#4c78a8"/><rect x="1380.72" y="332.29" width="5" height="24.00" fill="#4c78a8"/><rect x="1349.57" y="355.43" width="5" height="22.29" fill="#4c78a8"/><rect x="1598.78" y="397.43" width="5" height="25.71" fill="#4c78a8"/><rect x="1380.72" y="303.14" width="5" height="29.14" fill="#4c78a8"/><rect x="1396.30" y="324.57" width="5" height="26.57" fill="#4c78a8"/><rect x="1334.00" y="361.43" width="5" height="25.71" fill="#4c78a8"/><rect x="1474.18" y="421.43" width="5" height="26.57" fill="#4c78a8"/><rect x="1443.03" y="346.86" width="5" height="26.57" fill="#4c78a8"/><rect x="1474.18" y="394.86" width="5" height="26.57" fill="#4c78a8"/><rect x="1302.85" y="328.86" width="5" height="23.14" fill="#4c78a8"/><rect x="1458.60" y="424.86" width="5" height="27.43" fill="#4c78a8"/><rect x="1443.03" y="318.57" width="5" height="28.29" fill="#4c78a8"/><rect x="1443.03" y="292.86" width="5" height="25.71" fill="#4c78a8"/><rect x="1380.72" y="281.71" width="5" height="21.43" fill="#4c78a8"/><rect x="1411.88" y="373.43" width="5" height="25.71" fill="#4c78a8"/><rect x="1365.15" y="405.14" width="5" height="29.14" fill="#4c78a8"/><rect x="1318.43" y="423.14" width="5" height="25.71" fill="#4c78a8"/><line x1="1025.5" x2="1648.5" y1="502.5" y2="502.5" stroke="#888"/><line x1="1025.5" x2="1025.5" y1="202.5" y2="502.5" stroke="#888"/><line x1="1025.50" x2="1025.50" y1="502.5" y2="507.5" stroke="#888"/><text x="1025.50" y="517.5" text-anchor="start" font-size="10">4.0</text><line x1="1056.65" x2="1056.65" y1="502.5" y2="507.5" stroke="#888"/><text x="1056.65" y="517.5" text-anchor="middle" font-size="10">4.2</text><line x1="1087.80" x2="1087.80" y1="502.5" y2="507.5" stroke="#888"/><text x="1087.80" y="517.5" text-anchor="middle" font-size="10">4.4</text><line x1="1118.95" x2="1118.95" y1="502.5" y2="507.5" stroke="#888"/><text x="1118.95" y="517.5" text-anchor="middle" font-size="10">4.6</text><line x1="1150.10" x2="1150.10" y1="502.5" y2="507.5" stroke="#888"/><text x="1150.10" y="517.5" text-anchor="middle" font-size="10">4.8</text><line x1="1181.25" x2="1181.25" y1="502.5" y2="507.5" stroke="#888"/><text x="1181.25" y="517.5" text-anchor="middle" font-size="10">5.0</text><line x1="1212.40" x2="1212.40" y1="502.5" y2="507.5" stroke="#888"/><text x="1212.40" y="517.5" text-anchor="middle" font-size="10">5.2</text><line x1="1243.55" x2="1243.55" y1="502.5" y2="507.5" stroke="#888"/><text x="1243.55" y="517.5" text-anchor="middle" font-size="10">5.4</text><line x1="1274.70" x2="1274.70" y1="502.5" y2="507.5" stroke="#888"/><text x="1274.70" y="517.5" text-anchor="middle" font-size="10">5.6</text><line x1="1305.85" x2="1305.85" y1="502.5" y2="507.5" stroke="#888"/><text x="1305.85" y="517.5" text-anchor="middle" font-size="10">5.8</text><line x1="1337.00" x2="1337.00" y1="502.5" y2="507.5" stroke="#888"/><text x="1337.00" y="517.5" text-anchor="middle" font-size="10">6.0</text><line x1="1368.15" x2="1368.15" y1="502.5" y2="507.5" stroke="#888"/><text x="1368.15" y="517.5" text-anchor="middle" font-size="10">6.2</text><line x1="1399.30" x2="1399.30" y1="502.5" y2="507.5" stroke="#888"/><text x="1399.30" y="517.5" text-anchor="middle" font-size="10">6.4</text><line x1="1430.45" x2="1430.45" y1="502.5" y2="507.5" stroke="#888"/><text x="1430.45" y="517.5" text-anchor="middle" font-size="10">6.6</text><line x1="1461.60" x2="1461.60" y1="502.5" y2="507.5" stroke="#888"/><text x="1461.60" y="517.5" text-anchor="middle" font-size="10">6.8</text><line x1="1492.75" x2="1492.75" y1="502.5" y2="507.5" stroke="#888"/><text x="1492.75" y="517.5" text-anchor="middle" font-size="10">7.0</text><line x1="1523.90" x2="1523.90" y1="502.5" y2="507.5" stroke="#888"/><text x="1523.90" y="517.5" text-anchor="middle" font-size="10">7.2</text><line x1="1555.05" x2="1555.05" y1="502.5" y2="507.5" stroke="#888"/><text x="1555.05" y="517.5" text-anchor="middle" font-size="10">7.4</text><line x1="1586.20" x2="1586.20" y1="502.5" y2="507.5" stroke="#888"/><text x="1586.20" y="517.5" text-anchor="middle" font-size="10">7.6</text><line x1="1617.35" x2="1617.35" y1="502.5" y2="507.5" stroke="#888"/><text x="1617.35" y="517.5" text-anchor="middle" font-size="10">7.8</text><line x1="1648.50" x2="1648.50" y1="502.5" y2="507.5" stroke="#888"/><text x="1648.50" y="517.5" text-anchor="end" font-size="10">8.0</text><line x1="1020.5" x2="1025.5" y1="502.50" y2="502.50" stroke="#888"/><text x="1018.5" y="505.50" text-anchor="end" font-size="10">0</text><line x1="1020.5" x2="1025.5" y1="459.64" y2="459.64" stroke="#888"/><text x="1018.5" y="462.64" text-anchor="end" font-size="10">5</text><line x1="1020.5" x2="1025.5" y1="416.79" y2="416.79" stroke="#888"/><text x="1018.5" y="419.79" text-anchor="end" font-size="10">10</text><line x1="1020.5" x2="1025.5" y1="373.93" y2="373.93" stroke="#888"/><text x="1018.5" y="376.93" text-anchor="end" font-size="10">15</text><line x1="1020.5" x2="1025.5" y1="331.07" y2="331.07" stroke="#888"/><text x="1018.5" y="334.07" text-anchor="end" font-size="10">20</text><line x1="1020.5" x2="1025.5" y1="288.21" y2="288.21" stroke="#888"/><text x="1018.5" y="291.21" text-anchor="end" font-size="10">25</text><line x1="1020.5" x2="1025.5" y1="245.36" y2="245.36" stroke="#888"/><text x="1018.5" y="248.36" text-anchor="end" font-size="10">30</text><line x1="1020.5" x2="1025.5" y1="202.50" y2="202.50" stroke="#888"/><text x="1018.5" y="205.50" text-anchor="end" font-size="10">35</text><text x="1337.0" y="532.5" text-anchor="middle" font-size="11" font-weight="bold">sepalLength</text><text transform="translate(1001.5,352.5) rotate(-90)" text-anchor="middle" font-size="11" font-weight="bold">sepalWidth</text></svg><div class="abs" style="left:694px;top:112px;width:28px;height:28px;border:1px solid #ececec;border-radius:50%;background:#fff"><svg class="abs" style="left:5px;top:10.500px" width="16" height="5" viewBox="0 0 16 5" fill="#cfcfcf"><circle cx="2.500" cy="2.500" r="1.750"/><circle cx="8" cy="2.500" r="1.750"/><circle cx="13.500" cy="2.500" r="1.750"/></svg></div></div><div class="cell " style="left:44px;top:550px;width:740px;height:78px"><div class="gline" style="left:33px;top:5px;height:67px"></div><div class="ln" style="top:10.0px;left:0;width:21px">1</div><div class="fold" style="top:10.0px;left:23px"><svg width="9" height="9" viewBox="0 0 9 9" fill="none" stroke="#9a9ea8" stroke-width="1"><path d="M1.700 3.300 4.500 6.100 7.300 3.300"/></svg></div><div class="cl" style="top:10.0px;left:40.4px">dataset <span class="op">=</span> mo<span class="op">.</span><span style="color:#05a">ui</span><span class="op">.</span><span style="color:#05a">dropdown</span>(</div><div class="ln" style="top:29.6px;left:0;width:21px">2</div><div class="cl" style="top:29.6px;left:40.4px">    label<span class="op">=</span><span style="color:#a11">&quot;Choose dataset&quot;</span>, options<span class="op">=</span>data<span class="op">.</span><span style="color:#05a">list_datasets</span>(), value<span class="op">=</span><span style="color:#a11">&quot;iris&quot;</span></div><div class="ln" style="top:49.2px;left:0;width:21px">3</div><div class="cl" style="top:49.2px;left:40.4px">)</div></div><div class="cell " style="left:44px;top:648px;width:740px;height:235px"><div class="gline" style="left:36px;top:5px;height:224px"></div><div class="ln" style="top:10.0px;left:0;width:24px">1</div><div class="fold" style="top:10.0px;left:26px"><svg width="9" height="9" viewBox="0 0 9 9" fill="none" stroke="#9a9ea8" stroke-width="1"><path d="M1.700 3.300 4.500 6.100 7.300 3.300"/></svg></div><div class="cl" style="top:10.0px;left:43px">x <span class="op">=</span> mo<span class="op">.</span><span style="color:#05a">ui</span><span class="op">.</span><span style="color:#05a">dropdown</span>(</div><div class="ln" style="top:29.6px;left:0;width:24px">2</div><div class="cl" style="top:29.6px;left:43px">    label<span class="op">=</span><span style="color:#a11">&quot;Choose X value&quot;</span>, options<span class="op">=</span>df<span class="op">.</span><span style="color:#05a">columns</span><span class="op">.</span><span style="color:#05a">to_list</span>(), value<span class="op">=</span>df<span class="op">.</span><span style="color:#05a">columns</span>[<span style="color:#164">0</span>]</div><div class="ln" style="top:49.2px;left:0;width:24px">3</div><div class="cl" style="top:49.2px;left:43px">)</div><div class="ln" style="top:68.8px;left:0;width:24px">4</div><div class="fold" style="top:68.8px;left:26px"><svg width="9" height="9" viewBox="0 0 9 9" fill="none" stroke="#9a9ea8" stroke-width="1"><path d="M1.700 3.300 4.500 6.100 7.300 3.300"/></svg></div><div class="cl" style="top:68.8px;left:43px">y <span class="op">=</span> mo<span class="op">.</span><span style="color:#05a">ui</span><span class="op">.</span><span style="color:#05a">dropdown</span>(</div><div class="ln" style="top:88.4px;left:0;width:24px">5</div><div class="cl" style="top:88.4px;left:43px">    label<span class="op">=</span><span style="color:#a11">&quot;Choose Y value&quot;</span>, options<span class="op">=</span>df<span class="op">.</span><span style="color:#05a">columns</span><span class="op">.</span><span style="color:#05a">to_list</span>(), value<span class="op">=</span>df<span class="op">.</span><span style="color:#05a">columns</span>[<span style="color:#164">1</span>]</div><div class="ln" style="top:108.0px;left:0;width:24px">6</div><div class="cl" style="top:108.0px;left:43px">)</div><div class="ln" style="top:127.6px;left:0;width:24px">7</div><div class="fold" style="top:127.6px;left:26px"><svg width="9" height="9" viewBox="0 0 9 9" fill="none" stroke="#9a9ea8" stroke-width="1"><path d="M1.700 3.300 4.500 6.100 7.300 3.300"/></svg></div><div class="cl" style="top:127.6px;left:43px">plot <span class="op">=</span> mo<span class="op">.</span><span style="color:#05a">ui</span><span class="op">.</span><span style="color:#05a">dropdown</span>(</div><div class="ln" style="top:147.2px;left:0;width:24px">8</div><div class="cl" style="top:147.2px;left:43px">    label<span class="op">=</span><span style="color:#a11">&quot;Choose plot type&quot;</span>,</div><div class="ln" style="top:166.8px;left:0;width:24px">9</div><div class="cl" style="top:166.8px;left:43px">    options<span class="op">=</span>[<span style="color:#a11">&quot;mark_bar&quot;</span>, <span style="color:#a11">&quot;mark_circle&quot;</span>],</div><div class="ln" style="top:186.4px;left:0;width:24px">10</div><div class="cl" style="top:186.4px;left:43px">    value<span class="op">=</span><span style="color:#a11">&quot;mark_bar&quot;</span>,</div><div class="ln" style="top:206.0px;left:0;width:24px">11</div><div class="cl" style="top:206.0px;left:43px">)</div></div><div class="cell " style="left:44px;top:903px;width:740px;height:38px"><div class="gline" style="left:33px;top:5px;height:27px"></div><div class="ln" style="top:10.0px;left:0;width:21px">1</div><div class="cl" style="top:10.0px;left:40.4px">selected_dataset <span class="op">=</span> <span style="color:#30a">getattr</span>(data, dataset<span class="op">.</span><span style="color:#05a">value</span>)</div></div><div class="cell " style="left:44px;top:961px;width:740px;height:38.6px"><div class="gline" style="left:33px;top:5px;height:27.6px"></div><div class="ln" style="top:10.0px;left:0;width:21px">1</div><div class="cl" style="top:10.0px;left:40.4px">plot_type <span class="op">=</span> <span style="color:#30a">getattr</span>(alt<span class="op">.</span><span style="color:#05a">Chart</span>(df), plot<span class="op">.</span><span style="color:#05a">value</span>)</div></div></div>
<div class="col" style="left:1778px;top:31px;width:830px;height:173px"><div class="colhdr"><div class="ic" style="left:12px;top:3px;color:#3b3f58"><svg width="16" height="16" viewBox="0 0 24 24" fill="none" stroke="currentColor" stroke-width="2" stroke-linecap="round" stroke-linejoin="round" ><path d="m15 18-6-6 6-6"/></svg></div><div class="ic" style="left:52px;top:3px;color:#8f92a3"><svg width="16" height="16" viewBox="0 0 24 24" fill="none" stroke="currentColor" stroke-width="2" stroke-linecap="round" stroke-linejoin="round" ><path d="m9 18 6-6-6-6"/></svg></div><div class="ic" style="right:12px;top:3px;color:#3b3f58"><svg width="16" height="16" viewBox="0 0 24 24" fill="none" stroke="currentColor" stroke-width="2" stroke-linecap="round" stroke-linejoin="round" ><path d="M5 12h14"/><path d="M12 5v14"/></svg></div></div><div class="cell " style="left:44px;top:47px;width:740px;height:38px"><div class="gline" style="left:33px;top:5px;height:27px"></div><div class="ln" style="top:10.0px;left:0;width:21px">1</div><div class="cl" style="top:10.0px;left:40.4px"><span style="color:#b7bac7">Start coding or <span style="color:#6c7080;text-decoration:underline;text-underline-offset:2px">generate</span> with AI.</span></div></div></div>
<div class="cbtn " style="left:1987.2px;top:13px"><div class="ic" style="left:5.500px;top:4.800px"><svg width="14" height="14" viewBox="0 0 24 24" fill="none" stroke="currentColor" stroke-width="1.6" stroke-linecap="round" stroke-linejoin="round" ><path d="M4 12h16"/><path d="M4 18h16"/><path d="M4 6h16"/></svg></div></div><div class="cbtn " style="left:2026.2px;top:13px"><div class="ic" style="left:5.500px;top:4.800px"><svg width="14" height="14" viewBox="0 0 24 24" fill="none" stroke="currentColor" stroke-width="1.6" stroke-linecap="round" stroke-linejoin="round" ><path d="M12.220 2h-.440a2 2 0 0 0-2 2v.180a2 2 0 0 1-1 1.730l-.430.250a2 2 0 0 1-2 0l-.150-.080a2 2 0 0 0-2.730.730l-.220.380a2 2 0 0 0 .730 2.730l.150.100a2 2 0 0 1 1 1.720v.510a2 2 0 0 1-1 1.740l-.150.090a2 2 0 0 0-.730 2.730l.220.380a2 2 0 0 0 2.730.730l.150-.080a2 2 0 0 1 2 0l.430.250a2 2 0 0 1 1 1.730V20a2 2 0 0 0 2 2h.440a2 2 0 0 0 2-2v-.180a2 2 0 0 1 1-1.730l.430-.250a2 2 0 0 1 2 0l.150.080a2 2 0 0 0 2.730-.730l.220-.390a2 2 0 0 0-.730-2.730l-.150-.080a2 2 0 0 1-1-1.740v-.500a2 2 0 0 1 1-1.740l.150-.090a2 2 0 0 0 .730-2.730l-.220-.380a2 2 0 0 0-2.730-.730l-.150.080a2 2 0 0 1-2 0l-.430-.250a2 2 0 0 1-1-1.730V4a2 2 0 0 0-2-2z"/><circle cx="12" cy="12" r="3"/></svg></div></div><div class="cbtn red" style="left:2065.2px;top:13px"><div class="ic" style="left:5.500px;top:4.800px"><svg width="14" height="14" viewBox="0 0 24 24" fill="none" stroke="currentColor" stroke-width="1.6" stroke-linecap="round" stroke-linejoin="round" ><path d="M18 6 6 18"/><path d="m6 6 12 12"/></svg></div></div>
<div class="sbtn" style="left:2048px;top:846px"><div class="ic" style="left:12px;top:8px"><svg width="18" height="18" viewBox="0 0 24 24" fill="none" stroke="currentColor" stroke-width="1.5" stroke-linecap="round" stroke-linejoin="round" ><path d="M15.200 3a2 2 0 0 1 1.400.600l3.800 3.800a2 2 0 0 1 .600 1.400V19a2 2 0 0 1-2 2H5a2 2 0 0 1-2-2V5a2 2 0 0 1 2-2z"/><path d="M17 21v-7a1 1 0 0 0-1-1H8a1 1 0 0 0-1 1v7"/><path d="M7 3v4a1 1 0 0 0 1 1h7"/></svg></div></div><div class="sbtn" style="left:2048px;top:890px"><div class="ic" style="left:12px;top:8px"><svg width="18" height="18" viewBox="0 0 24 24" fill="none" stroke="currentColor" stroke-width="1.5" stroke-linecap="round" stroke-linejoin="round" ><rect width="18" height="7" x="3" y="3" rx="1"/><rect width="9" height="7" x="3" y="14" rx="1"/><rect width="5" height="7" x="16" y="14" rx="1"/></svg></div></div><div class="sbtn" style="left:2048px;top:934px"><div class="ic" style="left:12px;top:8px"><svg width="18" height="18" viewBox="0 0 24 24" fill="none" stroke="currentColor" stroke-width="1.5" stroke-linecap="round" stroke-linejoin="round" ><path d="M15 6v12a3 3 0 1 0 3-3H6a3 3 0 1 0 3 3V6a3 3 0 1 0-3 3h12a3 3 0 1 0-3-3"/></svg></div></div><div class="rbtn" style="left:2053.4px;top:986px"><div class="ic" style="left:8px;top:8px"><svg width="16" height="16" viewBox="0 0 24 24" fill="none" stroke="currentColor" stroke-width="1.5" stroke-linecap="round" stroke-linejoin="round" ><rect width="18" height="18" x="3" y="3" rx="2"/></svg></div></div><div class="rbtn" style="left:2053.4px;top:1028px"><div class="ic" style="left:8px;top:8px"><svg width="16" height="16" viewBox="0 0 24 24" fill="none" stroke="currentColor" stroke-width="1.5" stroke-linecap="round" stroke-linejoin="round" ><polygon points="6 3 20 12 6 21 6 3"/></svg></div></div>
<div class="status"><div class="ic" style="left:12px;top:10px;color:#5b6b86"><svg width="20" height="20" viewBox="0 0 24 24" fill="none" stroke="currentColor" stroke-width="1.8" stroke-linecap="round" stroke-linejoin="round" ><circle cx="12" cy="12" r="10"/><path d="m15 9-6 6"/><path d="m9 9 6 6"/></svg></div><div class="abs zero" style="left:36.400px;top:13px">0</div><div class="ic" style="left:60px;top:10px;color:#5b6b86"><svg width="20" height="20" viewBox="0 0 24 24" fill="none" stroke="currentColor" stroke-width="1.8" stroke-linecap="round" stroke-linejoin="round" ><path d="m7 11 2-2-2-2"/><path d="M11 13h4"/><rect width="18" height="18" x="3" y="3" rx="2" ry="2"/></svg></div><div class="abs sbt" style="left:96.3px;top:10px"><span style="font-size:13.5px;font-weight:400;letter-spacing:0.137px;">on startup:</span></div><div class="ic" style="left:165px;top:13px;color:#64748b"><svg width="14" height="14" viewBox="0 0 24 24" fill="none" stroke="currentColor" stroke-width="1.9" stroke-linecap="round" stroke-linejoin="round" ><path d="M4 14a1 1 0 0 1-.780-1.630l9.900-10.200a.500.500 0 0 1 .860.460l-1.920 6.020A1 1 0 0 0 13 10h7a1 1 0 0 1 .780 1.630l-9.900 10.200a.500.500 0 0 1-.860-.460l1.920-6.020A1 1 0 0 0 11 14z"/></svg></div><div class="abs sbt" style="left:182.8px;top:10px"><span style="font-size:13.5px;font-weight:400;letter-spacing:0.158px;">autorun</span></div><div class="abs vdiv" style="left:242px"></div><div class="abs sbt" style="left:254.7px;top:10px"><span style="font-size:13.5px;font-weight:400;letter-spacing:-0.015px;">on cell change:</span></div><div class="ic" style="left:348.7px;top:13px;color:#64748b"><svg width="14" height="14" viewBox="0 0 24 24" fill="none" stroke="currentColor" stroke-width="1.9" stroke-linecap="round" stroke-linejoin="round" ><path d="M4 14a1 1 0 0 1-.780-1.630l9.900-10.200a.500.500 0 0 1 .860.460l-1.920 6.020A1 1 0 0 0 13 10h7a1 1 0 0 1 .780 1.630l-9.900 10.200a.500.500 0 0 1-.860-.460l1.920-6.020A1 1 0 0 0 11 14z"/></svg></div><div class="abs sbt" style="left:366.6px;top:10px"><span style="font-size:13.5px;font-weight:400;letter-spacing:0.100px;">autorun</span></div><div class="abs vdiv" style="left:425px"></div><div class="abs sbt" style="left:438.4px;top:10px"><span style="font-size:13.5px;font-weight:400;letter-spacing:-0.008px;">on module change:</span></div><div class="ic" style="left:556.5px;top:13px;color:#64748b"><svg width="14" height="14" viewBox="0 0 24 24" fill="none" stroke="currentColor" stroke-width="1.9" stroke-linecap="round" stroke-linejoin="round" ><path d="M4 14a1 1 0 0 1-.780-1.630l9.900-10.200a.500.500 0 0 1 .860.460l-1.920 6.020A1 1 0 0 0 13 10h7a1 1 0 0 1 .780 1.630l-9.900 10.200a.500.500 0 0 1-.860-.460l1.920-6.020A1 1 0 0 0 11 14z"/></svg></div><div class="abs sbt" style="left:574.4px;top:10px"><span style="font-size:13.5px;font-weight:400;letter-spacing:0.115px;">autorun</span></div><div class="ic" style="left:625px;top:13px;color:#64748b"><svg width="14" height="14" viewBox="0 0 24 24" fill="none" stroke="currentColor" stroke-width="1.8" stroke-linecap="round" stroke-linejoin="round" ><path d="m6 9 6 6 6-6"/></svg></div><div class="ic" style="left:1792px;top:12px;color:#5b6b86"><svg width="16" height="16" viewBox="0 0 24 24" fill="none" stroke="currentColor" stroke-width="1.9" stroke-linecap="round" stroke-linejoin="round" ><path d="M6 19v-3"/><path d="M10 19v-3"/><path d="M14 19v-3"/><path d="M18 19v-3"/><path d="M8 11V9"/><path d="M16 11V9"/><path d="M12 11V9"/><path d="M2 15h20"/><path d="M2 7a2 2 0 0 1 2-2h16a2 2 0 0 1 2 2v1.100a2 2 0 0 0 0 3.837V17a2 2 0 0 1-2 2H4a2 2 0 0 1-2-2v-5.100a2 2 0 0 0 0-3.837Z"/></svg></div><div class="abs bar" style="left:1813px"><div style="width:62px"></div></div><div class="ic" style="left:1900px;top:12px;color:#5b6b86"><svg width="16" height="16" viewBox="0 0 24 24" fill="none" stroke="currentColor" stroke-width="1.9" stroke-linecap="round" stroke-linejoin="round" ><rect width="16" height="16" x="4" y="4" rx="2"/><rect width="6" height="6" x="9" y="9" rx="1"/><path d="M15 2v2"/><path d="M15 20v2"/><path d="M2 15h2"/><path d="M2 9h2"/><path d="M20 15h2"/><path d="M20 9h2"/><path d="M9 2v2"/><path d="M9 20v2"/></svg></div><div class="abs bar" style="left:1921px"><div style="width:14px"></div></div><div class="ic" style="left:2016px;top:12px;color:#5b6b86"><svg width="16" height="16" viewBox="0 0 24 24" fill="none" stroke="currentColor" stroke-width="1.9" stroke-linecap="round" stroke-linejoin="round" ><path d="M9.937 15.500A2 2 0 0 0 8.500 14.063l-6.135-1.582a.500.500 0 0 1 0-.962L8.500 9.936A2 2 0 0 0 9.937 8.500l1.582-6.135a.500.500 0 0 1 .963 0L14.063 8.500A2 2 0 0 0 15.500 9.937l6.135 1.581a.500.500 0 0 1 0 .964L15.500 14.063a2 2 0 0 0-1.437 1.437l-1.582 6.135a.500.500 0 0 1-.963 0z"/><path d="M20 3v4"/><path d="M22 5h-4"/><path d="M4 17v2"/><path d="M5 18H3"/></svg></div><div class="ic" style="left:2048.200px;top:12px;color:#5b6b86"><svg width="16" height="16" viewBox="0 0 16 16" fill="currentColor"><path fill-rule="evenodd" d="M7.998 15.035c-4.562 0-7.873-2.914-7.998-3.749V9.338c.085-.628.677-1.686 1.588-2.065.013-.07.024-.143.036-.218.029-.183.06-.384.126-.612-.201-.508-.254-1.084-.254-1.656 0-.87.128-1.769.693-2.484.579-.733 1.494-1.124 2.724-1.261 1.206-.134 2.262.034 2.944.765.05.053.096.108.139.165.044-.057.094-.112.143-.165.682-.731 1.738-.899 2.944-.765 1.230.137 2.145.528 2.724 1.261.566.715.693 1.614.693 2.484 0 .572-.053 1.148-.254 1.656.066.228.098.429.126.612.012.076.024.148.037.218.924.385 1.522 1.471 1.591 2.095v1.872c0 .766-3.351 3.795-8.002 3.795Zm0-1.485c2.280 0 4.584-1.110 5.002-1.433V7.862l-.023-.116c-.490.210-1.075.291-1.727.291-1.146 0-2.059-.327-2.710-.991A3.222 3.222 0 0 1 8 6.303a3.240 3.240 0 0 1-.544.743c-.650.664-1.563.991-2.710.991-.652 0-1.236-.081-1.727-.291l-.023.116v4.255c.419.323 2.722 1.433 5.002 1.433ZM6.762 2.830c-.193-.206-.637-.413-1.682-.297-1.019.113-1.479.404-1.713.700-.247.312-.369.789-.369 1.554 0 .793.129 1.171.308 1.371.162.181.519.379 1.442.379.853 0 1.339-.235 1.638-.540.315-.322.527-.827.617-1.553.117-.935-.037-1.395-.241-1.614Zm4.155-.297c-1.044-.116-1.488.091-1.681.297-.204.219-.359.679-.242 1.614.091.726.303 1.231.618 1.553.299.305.784.540 1.638.540.922 0 1.280-.198 1.442-.379.179-.200.308-.578.308-1.371 0-.765-.123-1.242-.370-1.554-.233-.296-.693-.587-1.713-.700Z"/><path d="M6.250 9.037a.750.750 0 0 1 .750.750v1.501a.750.750 0 0 1-1.500 0V9.787a.750.750 0 0 1 .750-.750Zm4.250.750v1.501a.750.750 0 0 1-1.500 0V9.787a.750.750 0 0 1 1.500 0Z"/></svg></div><div class="ic" style="left:2080px;top:12px;color:#5b6b86"><svg width="16" height="16" viewBox="0 0 24 24" fill="none" stroke="currentColor" stroke-width="1.9" stroke-linecap="round" stroke-linejoin="round" ><circle cx="12" cy="12" r="10"/><path d="m9 12 2 2 4-4"/></svg></div></div>
</div></body></html>
